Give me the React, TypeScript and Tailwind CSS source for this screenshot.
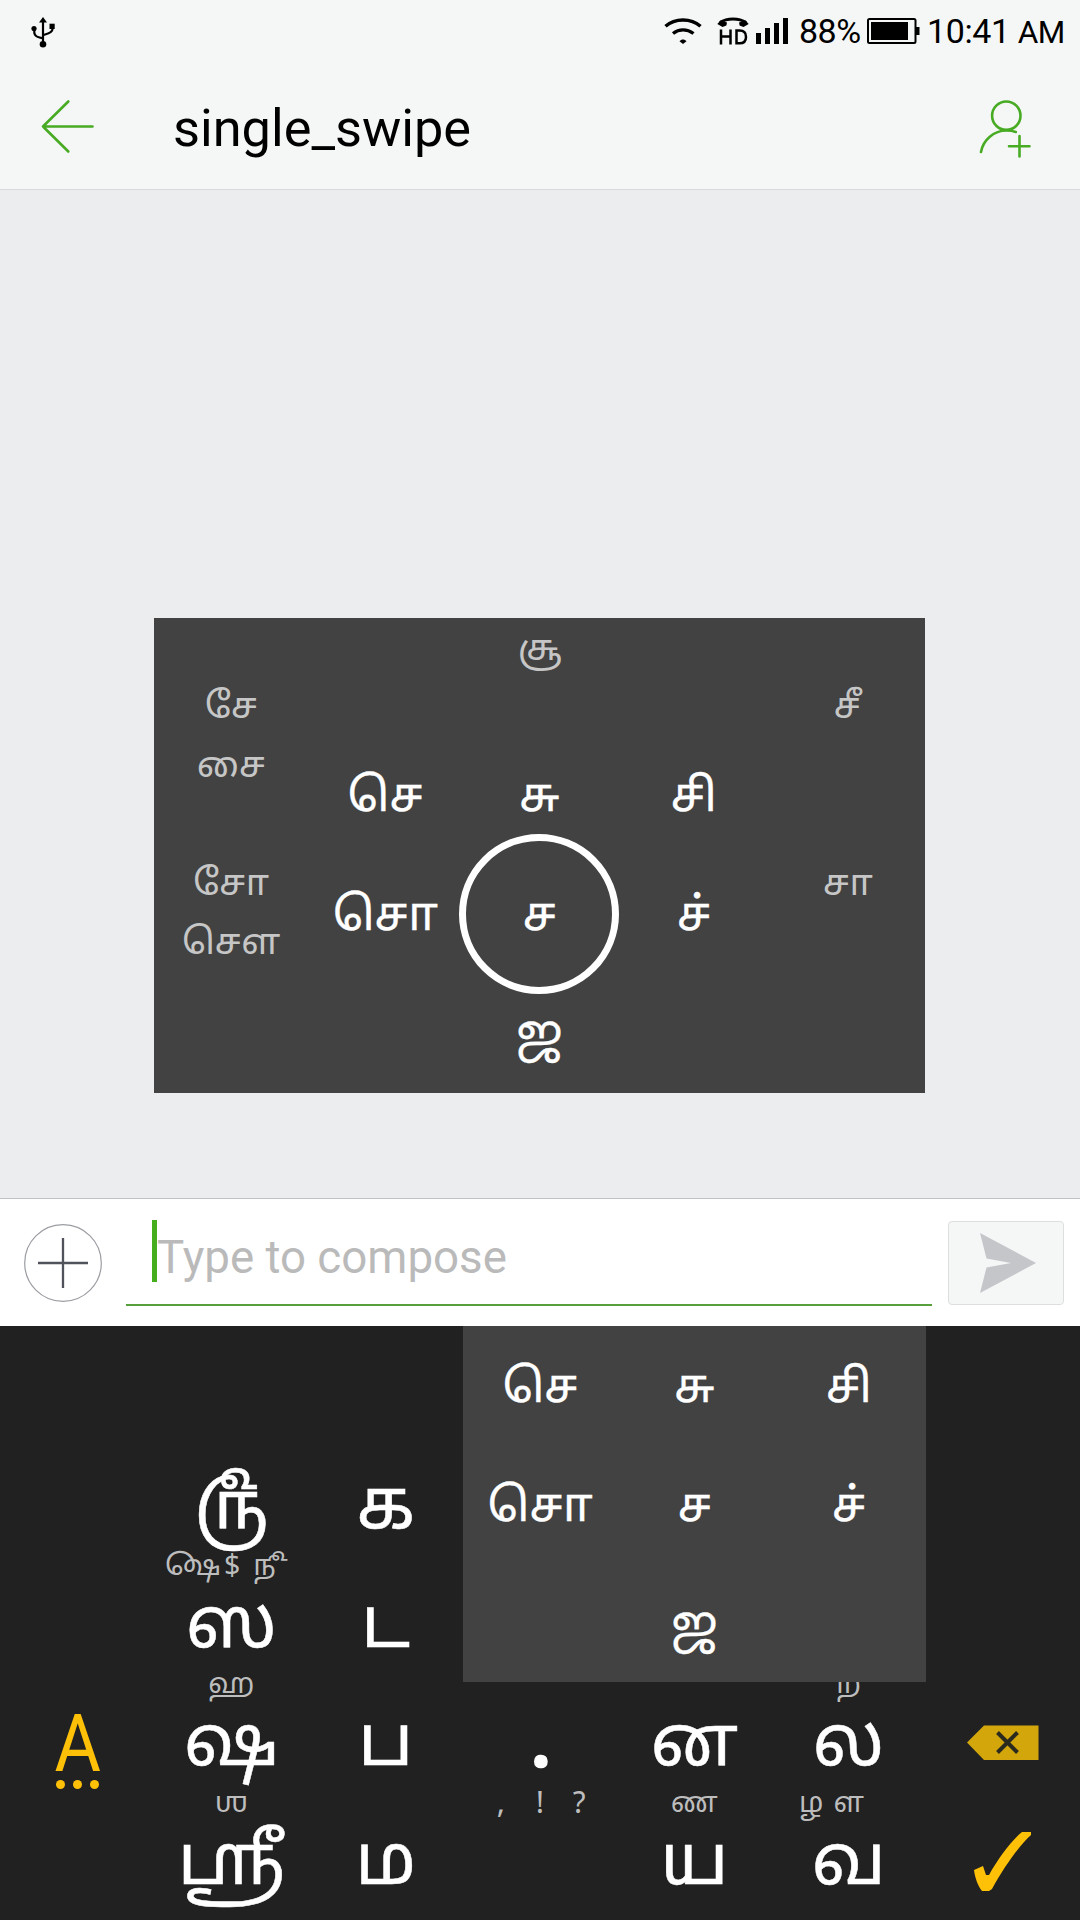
import React from 'react';

const INK = '#48ab24';

function StatusBar() {
  return (
    <div className="flex h-[63px] items-start pl-[31px] text-black">
      <svg className="mt-[17px] h-[31px] w-[25px]" viewBox="0 0 25 31" fill="none" stroke="#000" strokeWidth="2.2">
        <path d="M12 4V27" />
        <path d="M3.3 12v3.5c0 4 6 5.500 9 5.800M21.500 9v3c0 4-6 5-9 6" />
        <path d="M12 0l4 5.400h-8z" fill="#000" stroke="none" />
        <circle cx="12" cy="27.300" r="3.300" fill="#000" stroke="none" />
        <circle cx="3" cy="11.500" r="2.600" fill="#000" stroke="none" />
        <rect x="18.500" y="6.700" width="5.200" height="5.300" fill="#000" stroke="none" />
      </svg>
      <svg className="ml-[608px] mt-[17px] h-[28px] w-[38px]" viewBox="0 0 38 28" fill="none" stroke="#000" strokeWidth="3.400">
        <path d="M1.500 9.300C11 .8 27 .8 36.500 9.300M9 16.500c6-4.800 14-4.800 20.500 0" />
        <path d="M15.500 24.200c2-2.200 5-2.200 7 0L19 27z" fill="#000" stroke="none" />
      </svg>
      <svg className="ml-[14px] mt-[16px] h-[30px] w-[34px]" viewBox="0 0 34 30" fill="none" stroke="#000">
        <path d="M4 6.500C11 1.800 23 1.800 30 6.500" strokeWidth="3" />
        <path d="M1.300 8L4.500 4.500l6.500 2-.6 3L6.500 11zM32.700 8L29.500 4.500l-6.500 2 .6 3L27.500 11z" fill="#000" stroke="none" />
        <path d="M5 13.500V28.500M14.500 13.500V28.500M5 20.500H14.500M20.500 14.600V27.300H23.500c5 0 6.500-2.500 6.500-6.400s-1.500-6.300-6.500-6.300z" strokeWidth="2.500" />
      </svg>
      <svg className="ml-[6px] mt-[18px] h-[26px] w-[32px]" viewBox="0 0 32 26">
        <path d="M0 15h5v11H0zM9 10h5v16H9zM18 5h5v21h-5zM27 0h5v26h-5z" />
      </svg>
      <span className="ml-[11px] mt-[11px] w-[68px] font-['Roboto'] text-[34px] leading-[40px] tracking-[-0.5px]">88%</span>
      <svg className="mt-[18px] h-[26px] w-[53px]" viewBox="0 0 53 26">
        <rect x="1" y="1" width="47.500" height="24" rx="1.500" fill="none" stroke="#000" strokeWidth="2" />
        <path d="M4 4h37v18H4zM49 9h3.500v8H49z" />
      </svg>
      <span className="ml-[7px] mt-[11px] whitespace-nowrap font-['Roboto'] text-[34px] leading-[40px] tracking-[-0.4px]">
        10:41 <span className="text-[31.500px]">AM</span>
      </span>
    </div>
  );
}

function TitleBar() {
  return (
    <header className="flex h-[126px] items-start">
      <svg className="ml-[40px] mt-[35px] h-[56px] w-[56px] shrink-0" viewBox="0 0 56 56" fill="none" stroke={INK} strokeWidth="2.600" strokeLinecap="round" strokeLinejoin="round">
        <path d="M28.300 3.500L3 28.500l25.300 25M3 28.500h49.500" />
      </svg>
      <h1 className="ml-[77px] mt-[33px] flex-1 font-['Roboto'] text-[52.300px] leading-[64px] text-black">single_swipe</h1>
      <svg className="mr-[48px] mt-[35px] h-[62px] w-[54px]" viewBox="0 0 54 62" fill="none" stroke={INK} strokeWidth="2.600" strokeLinecap="round">
        <circle cx="28.300" cy="17.700" r="14.200" />
        <path d="M3 54C5 42 16 32.500 28.300 32.500c3.500 0 7 .5 9.500 1.500M31 48.300h20.500M41.500 38v20.500" />
      </svg>
    </header>
  );
}

const TAMIL = "font-['Noto_Sans_Tamil','Noto_Sans',sans-serif]";

function Petal({ children }: { children?: React.ReactNode }) {
  return (
    <div className="flex justify-center pt-[33px] text-[46.500px] leading-[60px] whitespace-nowrap text-white [-webkit-text-stroke:0.3px]">
      {children}
    </div>
  );
}

function Outer({ lines, className }: { lines: string[]; className: string }) {
  return (
    <div className={'flex flex-col items-center text-[36.500px] leading-[59px] whitespace-nowrap text-[#c6c6c6] ' + className}>
      {lines.map((l) => (
        <span key={l}>{l}</span>
      ))}
    </div>
  );
}

function SwipeWheel() {
  return (
    <div className={'ml-[154px] mt-[428px] grid h-[475px] w-[771px] grid-cols-5 grid-rows-4 bg-[#424242] ' + TAMIL}>
      <Outer lines={['சே', 'சை']} className="pt-[62px]" />
      <div />
      <Outer lines={['சூ']} className="pt-[4px]" />
      <div />
      <Outer lines={['சீ']} className="pt-[62px]" />
      <div />
      <Petal>செ</Petal>
      <Petal>சு</Petal>
      <Petal>சி</Petal>
      <div />
      <Outer lines={['சோ', 'சௌ']} className="pt-[1px]" />
      <Petal>சொ</Petal>
      <div className="relative">
        <Petal>ச</Petal>
        <div className="absolute -left-[3px] -top-[22px] h-[160px] w-[160px] rounded-full border-[7px] border-white" />
      </div>
      <Petal>ச்</Petal>
      <Outer lines={['சா']} className="pt-[1px]" />
      <div />
      <div />
      <Petal>ஜ</Petal>
      <div />
      <div />
    </div>
  );
}

function Composer() {
  return (
    <div className="flex h-[128px] items-start border-t border-[#c0c3c6] bg-white">
      <svg className="ml-[23px] mt-[24px] h-[80px] w-[80px] shrink-0" viewBox="0 0 80 80" fill="none">
        <circle cx="40" cy="40" r="38.300" stroke="#9b9da3" strokeWidth="1.200" />
        <path d="M15 40h50M40 15v50" stroke="#50535b" strokeWidth="2.300" />
      </svg>
      <div className="ml-[23px] mt-[21px] flex h-[86px] w-[806px] items-start border-b-2 border-[#58a03c] pl-[26px]">
        <div className="h-[62px] w-[5px] shrink-0 bg-[#46ad1c]" />
        <span className="mt-[11px] whitespace-nowrap font-['Roboto'] text-[45.700px] leading-[54px] text-[#bababa]">Type to compose</span>
      </div>
      <div className="ml-[16px] mt-[22px] flex h-[84px] w-[116px] items-center justify-center rounded-[4px] border border-[#dcdfdd] bg-[#f5f7f6] pl-[4px]">
        <svg className="h-[60px] w-[56px]" viewBox="0 0 56 60" fill="#c5c6ca">
          <path d="M0 0L56 30 0 60 6.500 34.500 31 30 6.500 25.500z" />
        </svg>
      </div>
    </div>
  );
}

function Key({ hint, children }: { hint?: React.ReactNode; children?: React.ReactNode }) {
  return (
    <div className="-mt-[11px] flex flex-col items-center whitespace-nowrap">
      <div className="h-[32px] whitespace-pre text-[28.500px] leading-[30px] text-[#bdbdbd]">{hint}</div>
      <div className="text-[71px] leading-[88px] text-white [-webkit-text-stroke:0.5px]">{children}</div>
    </div>
  );
}

function Punctuation() {
  return (
    <span className="flex text-[31px]">
      {[',', '!', '?'].map((c) => (
        <span key={c} className="w-[39px] text-center">
          {c}
        </span>
      ))}
    </span>
  );
}

function Keyboard() {
  return (
    <div className={'relative grid h-[594px] grid-cols-7 grid-rows-5 overflow-hidden bg-[#212121] ' + TAMIL}>
      <div className="col-span-7" />
      <div />
      <Key>௹</Key>
      <Key>க</Key>
      <div className="col-span-4" />
      <div />
      <Key
        hint={
          <span className="mr-[10px] flex">
            <span>௸</span>
            <span className="ml-[3px]">$</span>
            <span className="ml-[13px]">௺</span>
          </span>
        }
      >
        ஸ
      </Key>
      <Key>ட</Key>
      <div className="col-span-4" />
      <div className="flex flex-col items-center pt-[23px] text-[#ffc107]">
        <span className="h-[75px] scale-x-90 pl-px font-['Roboto'] text-[79px] leading-[78px]">A</span>
        <span className="flex gap-2">
          <i className="h-[9px] w-[9px] rounded-full bg-[#ffc107]" />
          <i className="h-[9px] w-[9px] rounded-full bg-[#ffc107]" />
          <i className="h-[9px] w-[9px] rounded-full bg-[#ffc107]" />
        </span>
      </div>
      <Key hint="ஹ">ஷ</Key>
      <Key>ப</Key>
      <Key>
        <span className="relative top-[2px] left-px font-bold [-webkit-text-stroke:1.500px]">.</span>
      </Key>
      <Key>ன</Key>
      <Key hint="ற">ல</Key>
      <div className="flex items-start justify-center pt-[43px]">
        <svg className="h-[36px] w-[74px]" viewBox="0 0 74 36">
          <path d="M1 17.500L18 0.500H72.500V35H18z" fill="#d3a70b" />
          <path d="M31.500 7.500l20 20M51.500 7.500l-20 20" stroke="#2a2a1f" strokeWidth="4" />
        </svg>
      </div>
      <div />
      <Key hint="ஶ">ஸ்ரீ</Key>
      <Key>ம</Key>
      <Key hint={<Punctuation />} />
      <Key hint="ண">ய</Key>
      <Key
        hint={
          <span className="mr-[34px] flex gap-[10px]">
            <span>ழ</span>
            <span>ள</span>
          </span>
        }
      >
        வ
      </Key>
      <div className="flex justify-center pl-[2px] pt-[30px]">
        <svg className="h-[62px] w-[60px]" viewBox="0 0 60 62" fill="#ffc107">
          <path d="M0 39L9 35l3 9 3 0 C24 28 37 10 48 1h9v3C46 14 31 34 18 58l-3 2H8C4 55 1 47 0 39z" />
        </svg>
      </div>
      <div className="absolute left-[463px] top-0 grid h-[356px] w-[463px] auto-rows-[118.600px] grid-cols-3 overflow-hidden bg-[#424242] pt-[2px]">
        <Petal>செ</Petal>
        <Petal>சு</Petal>
        <Petal>சி</Petal>
        <Petal>சொ</Petal>
        <Petal>ச</Petal>
        <Petal>ச்</Petal>
        <div />
        <Petal>ஜ</Petal>
      </div>
    </div>
  );
}

export default function App() {
  return (
    <main className="flex h-[1920px] w-[1080px] flex-col overflow-hidden bg-[#ecedef]">
      <div className="h-[190px] border-b border-[#d8dbda] bg-[#f5f7f6]">
        <StatusBar />
        <TitleBar />
      </div>
      <div className="h-[1008px]">
        <div className="flow-root">
          <SwipeWheel />
        </div>
      </div>
      <Composer />
      <Keyboard />
    </main>
  );
}
